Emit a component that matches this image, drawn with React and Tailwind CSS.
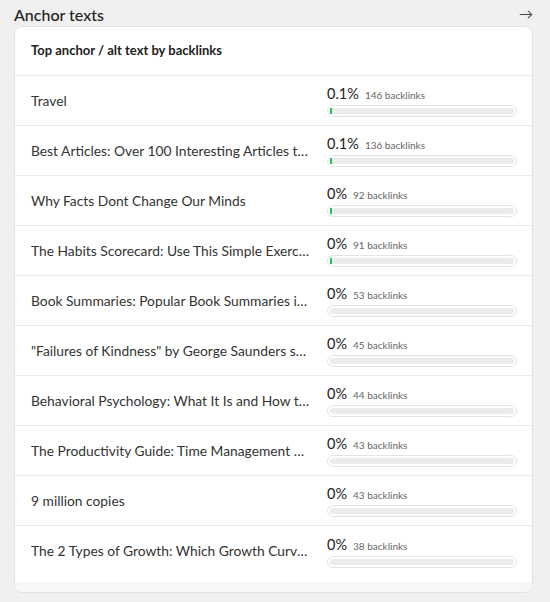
const rows = [
  { text: 'Travel', pct: '0.1%', count: 146, fill: true },
  { text: 'Best Articles: Over 100 Interesting Articles to Read', pct: '0.1%', count: 136, fill: true },
  { text: 'Why Facts Dont Change Our Minds', pct: '0%', count: 92, fill: true },
  { text: 'The Habits Scorecard: Use This Simple Exercise to Discover Your Habits', pct: '0%', count: 91, fill: true },
  { text: 'Book Summaries: Popular Book Summaries in One Place', pct: '0%', count: 53 },
  { text: '"Failures of Kindness" by George Saunders speech', pct: '0%', count: 45 },
  { text: 'Behavioral Psychology: What It Is and How to Use It', pct: '0%', count: 44 },
  { text: 'The Productivity Guide: Time Management Strategies', pct: '0%', count: 43 },
  { text: '9 million copies', pct: '0%', count: 43 },
  { text: 'The 2 Types of Growth: Which Growth Curve Are You On?', pct: '0%', count: 38 },
]

export default function App() {
  return (
    <div
      className="min-h-[602px] w-[550px] bg-[#f0f0f0] pl-[14px] pr-[17px] pt-[3px] text-[#333]"
      style={{ fontFamily: 'Lato, "Open Sans", sans-serif' }}
    >
      <div className="flex h-[23px] items-center justify-between">
        <h2 className="text-[16px] font-medium text-[#222]">Anchor texts</h2>
        <span className="-mt-[2px] text-[14px] leading-none text-[#444]">→</span>
      </div>
      <div className="overflow-hidden rounded-[8px] border border-[#e3e3e3] bg-white">
        <div className="flex h-[49px] items-center border-b border-[#ebebeb] px-[16px] text-[13px] font-bold text-[#222]">
          Top anchor / alt text by backlinks
        </div>
        <div className="pb-[6px]">
          {rows.map((r, i) => (
            <div
              key={i}
              className={
                'flex h-[50px] items-center pl-[16px] pr-[15px] ' +
                (i < rows.length - 1 ? 'border-b border-[#ebebeb]' : '')
              }
            >
              <div className="w-[282px] shrink-0 truncate pr-[2px] pt-[1px] text-[13.8px] text-[#333]">{r.text}</div>
              <div className="ml-[14px] flex flex-1 flex-col pt-[1px]">
                <div className="flex h-[18px] items-end gap-[6px]">
                  <span className="text-[14.5px] leading-[18px] text-[#222]">{r.pct}</span>
                  <span className="pb-[2px] text-[10px] leading-[12px] text-[#666]">{r.count} backlinks</span>
                </div>
                <div className="mt-[2px] h-[12px] w-[190px] rounded-full border border-[#e4e4e4] bg-white p-[2px]">
                  <div className="relative h-full w-full rounded-full bg-[#ececec]">
                    {r.fill && <div className="absolute left-0 top-0 h-full w-[2px] bg-[#22c55e]" />}
                  </div>
                </div>
              </div>
            </div>
          ))}
        </div>
        <div className="h-[10px] bg-[#f7f7f7]" />
      </div>
    </div>
  )
}
